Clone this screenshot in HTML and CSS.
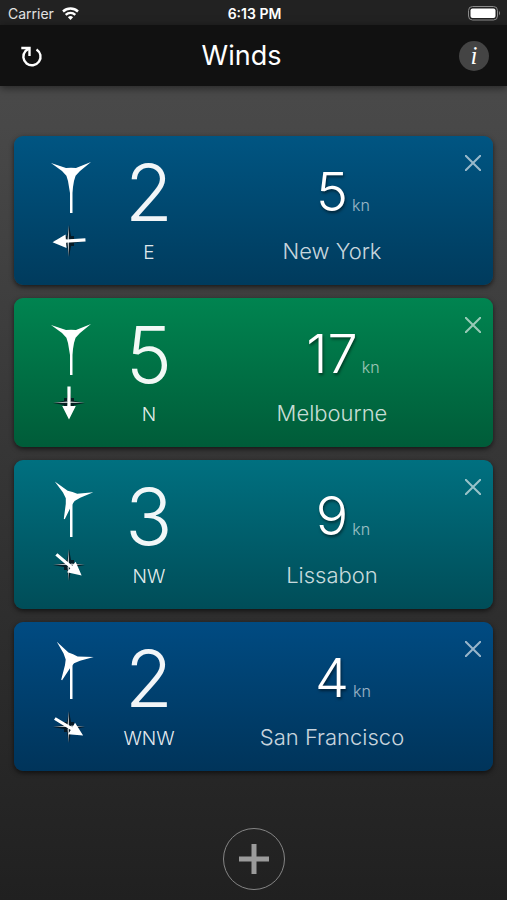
FILE: index.html
```
<!DOCTYPE html>
<html lang="en">
<head>
<meta charset="utf-8">
<meta name="viewport" content="width=device-width, initial-scale=1">
<title>Winds</title>
<link rel="stylesheet" href="styles.css">
</head>
<body>
<svg class="defs" aria-hidden="true">
  <defs>
    <symbol id="rotor" viewBox="-24 -24 48 48">
      <path d="M-0.500 23 L-3 8 L-4.600 2.700 L-9 -2 L-20 -10 L-5 -5 L0 -5.200 L5 -5 L20 -11 L9 -2 L4.600 2.700 L3 8 L0.500 23 Z"/>
    </symbol>
    <symbol id="rose" viewBox="-18 -18 36 36">
      <path fill="#06141c" opacity=".85" d="M0 -16 L2 -5 L5 -5 L5 -2 L16 0 L5 2 L5 5 L2 5 L0 16 L-2 5 L-5 5 L-5 2 L-16 0 L-5 -2 L-5 -5 L-2 -5 Z"/>
      <path fill="#fff" opacity=".7" d="M0 -16 L0 0 L-1.500 -2 Z M16 0 L0 0 L2 -1.500 Z M0 16 L0 0 L-1.500 2 Z M-16 0 L0 0 L-2 -1.500 Z"/>
    </symbol>
    <symbol id="arrow" viewBox="-18 -18 36 36">
      <path d="M-1.600 -16.500 H1.600 V3 H6.800 L0 16.500 L-6.800 3 H-1.600 Z"/>
    </symbol>
  </defs>
</svg>

<div class="status">
  <div class="carrier">
    <span>Carrier</span>
    <svg width="17" height="13" viewBox="0 0 17 13" fill="none" stroke="#fff" stroke-width="2.400">
      <path d="M1 4.500 A11 11 0 0 1 16 4.500"/>
      <path d="M3.700 7.800 A7 7 0 0 1 13.300 7.800"/>
      <path d="M8.500 13 L5.900 10.200 A3.700 3.700 0 0 1 11.100 10.200 Z" fill="#fff" stroke="none"/>
    </svg>
  </div>
  <time>6:13 PM</time>
  <svg class="battery" width="33" height="15" viewBox="0 0 33 15">
    <rect x=".5" y=".5" width="29" height="13.500" rx="4" fill="none" stroke="#8a8a8a"/>
    <rect x="2.500" y="2.500" width="25" height="9.500" rx="2" fill="#fff"/>
    <path d="M31 5 Q33 7.200 31 9.500 Z" fill="#8a8a8a"/>
  </svg>
</div>

<header class="bar">
  <button class="icon-button" aria-label="Refresh">
    <svg width="30" height="30" viewBox="0 0 30 30" fill="none" stroke="#fff" stroke-width="2.400">
      <path d="M20.500 8.400 A8.600 8.600 0 1 1 9.500 10 L13 7.500"/>
      <path d="M5.300 7 H13.500 V15"/>
    </svg>
  </button>
  <h1>Winds</h1>
  <button class="icon-button info" aria-label="Info">i</button>
</header>

<main>
  <ul class="cards">
    <li class="card blue">
      <div class="icons">
        <svg width="48" height="66" viewBox="-24 -24 48 66" fill="#fff"><path d="M-1 0 H1.500 V40 H-1 Z"/><use href="#rotor" x="-24" y="-24" width="48" height="48"/></svg>
        <svg class="compass" width="36" height="36" viewBox="-18 -18 36 36" fill="#fff"><use href="#rose" x="-18" y="-18" width="36" height="36"/><use href="#arrow" x="-18" y="-18" width="36" height="36" transform="rotate(86)"/></svg>
      </div>
      <div class="force"><strong>2</strong><span>E</span></div>
      <div class="place"><div class="speed"><b>5</b><small>kn</small></div><h2>New York</h2></div>
      <button class="close" aria-label="Remove New York"><svg width="16" height="16" viewBox="0 0 16 16"><path d="M0 0 L16 16 M16 0 L0 16"/></svg></button>
    </li>
    <li class="card green">
      <div class="icons">
        <svg width="48" height="66" viewBox="-24 -24 48 66" fill="#fff"><path d="M-1 0 H1.500 V40 H-1 Z"/><use href="#rotor" x="-24" y="-24" width="48" height="48"/></svg>
        <svg class="compass" width="36" height="36" viewBox="-18 -18 36 36" fill="#fff"><use href="#rose" x="-18" y="-18" width="36" height="36"/><use href="#arrow" x="-18" y="-18" width="36" height="36"/></svg>
      </div>
      <div class="force"><strong>5</strong><span>N</span></div>
      <div class="place"><div class="speed"><b>17</b><small>kn</small></div><h2>Melbourne</h2></div>
      <button class="close" aria-label="Remove Melbourne"><svg width="16" height="16" viewBox="0 0 16 16"><path d="M0 0 L16 16 M16 0 L0 16"/></svg></button>
    </li>
    <li class="card teal">
      <div class="icons">
        <svg width="48" height="66" viewBox="-24 -24 48 66" fill="#fff"><path d="M-1 0 H1.500 V40 H-1 Z"/><use href="#rotor" x="-24" y="-24" width="48" height="48" transform="rotate(17)"/></svg>
        <svg class="compass" width="36" height="36" viewBox="-18 -18 36 36" fill="#fff"><use href="#rose" x="-18" y="-18" width="36" height="36"/><use href="#arrow" x="-18" y="-18" width="36" height="36" transform="rotate(-50)"/></svg>
      </div>
      <div class="force"><strong>3</strong><span>NW</span></div>
      <div class="place"><div class="speed"><b>9</b><small>kn</small></div><h2>Lissabon</h2></div>
      <button class="close" aria-label="Remove Lissabon"><svg width="16" height="16" viewBox="0 0 16 16"><path d="M0 0 L16 16 M16 0 L0 16"/></svg></button>
    </li>
    <li class="card navy">
      <div class="icons">
        <svg width="48" height="66" viewBox="-24 -24 48 66" fill="#fff"><path d="M-1 0 H1.500 V40 H-1 Z"/><use href="#rotor" x="-24" y="-24" width="48" height="48" transform="rotate(24)"/></svg>
        <svg class="compass" width="36" height="36" viewBox="-18 -18 36 36" fill="#fff"><use href="#rose" x="-18" y="-18" width="36" height="36"/><use href="#arrow" x="-18" y="-18" width="36" height="36" transform="rotate(-59)"/></svg>
      </div>
      <div class="force"><strong>2</strong><span>WNW</span></div>
      <div class="place"><div class="speed"><b>4</b><small>kn</small></div><h2>San Francisco</h2></div>
      <button class="close" aria-label="Remove San Francisco"><svg width="16" height="16" viewBox="0 0 16 16"><path d="M0 0 L16 16 M16 0 L0 16"/></svg></button>
    </li>
  </ul>
  <button class="add" aria-label="Add place">
    <svg width="30" height="30" viewBox="0 0 30 30"><path d="M0 15 H30 M15 0 V30" stroke="#9b9b9b" stroke-width="5"/></svg>
  </button>
</main>
</body>
</html>
```
FILE: styles.css
```
* {
  box-sizing: border-box;
}

body {
  margin: 0;
  min-height: 100vh;
  background: linear-gradient(#4c4c4c, #484848 14%, #363636 50%, #222 96%, #202020);
  color: #fff;
  font-family: Inter, "Liberation Sans", sans-serif;
}

svg {
  display: block;
}

.defs {
  position: absolute;
  width: 0;
  height: 0;
}

button {
  border: 0;
  padding: 0;
  background: none;
  color: inherit;
}

.status {
  display: grid;
  grid-template-columns: 1fr auto 1fr;
  align-items: center;
  height: 25px;
  padding: 2px 6px 0 8px;
  background: #222;
  font-size: 14px;
}

.carrier {
  display: flex;
  align-items: center;
  gap: 8px;
  color: #e2e2e2;
}

.status time {
  font-weight: 600;
}

.battery {
  justify-self: end;
}

.bar {
  display: grid;
  grid-template-columns: 30px 1fr 30px;
  align-items: center;
  height: 61px;
  padding: 0 18px 0 16px;
  background: #111;
  box-shadow: 0 2px 8px rgba(0, 0, 0, 0.5);
}

.bar h1 {
  margin: 0;
  padding-right: 22px;
  font-size: 27px;
  font-weight: 400;
  text-align: center;
}

.icon-button {
  width: 30px;
  height: 30px;
  border-radius: 50%;
}

.info {
  background: #444;
  font: italic 25px/28px "Liberation Serif", serif;
}

main {
  padding: 50px 14px 10px;
}

.cards {
  display: grid;
  gap: 13px;
  margin: 0;
  padding: 0;
  list-style: none;
}

.card {
  position: relative;
  display: grid;
  grid-template-columns: 70px 86px 1fr;
  min-height: 149px;
  padding: 0 21px 0 22px;
  border-radius: 9px;
  box-shadow: 0 2px 5px rgba(0, 0, 0, 0.6);
}

.blue {
  background: linear-gradient(#005582, #003b5d);
}

.green {
  background: linear-gradient(#008450, #005c39);
}

.teal {
  background: linear-gradient(#007080, #004d58);
}

.navy {
  background: linear-gradient(#004b82, #00345a);
}

.icons {
  display: flex;
  flex-direction: column;
  align-items: center;
  gap: 8px;
  padding-top: 13px;
}

.compass {
  margin-right: 4px;
}

.force {
  padding-top: 17px;
  text-align: center;
}

.force strong {
  display: block;
  color: rgba(255, 255, 255, 0.95);
  font-size: 78px;
  font-weight: 300;
  line-height: 80px;
}

.force span {
  display: block;
  margin-top: 8px;
  color: rgba(255, 255, 255, 0.9);
  font-size: 19px;
  font-weight: 300;
  line-height: 24px;
}

.place {
  padding-top: 28px;
}

.speed {
  display: grid;
  grid-template-columns: 1fr auto 1fr;
  align-items: baseline;
  column-gap: 4px;
}

.speed b {
  grid-column: 2;
  font-size: 54px;
  font-weight: 300;
  line-height: 56px;
  text-shadow: 1px 2px 3px rgba(0, 0, 0, 0.5);
}

.speed small {
  font-size: 16px;
  font-weight: 300;
  line-height: 20px;
  opacity: 0.6;
}

.place h2 {
  margin: 17px 0 0;
  color: rgba(255, 255, 255, 0.8);
  font-size: 22px;
  font-weight: 300;
  line-height: 28px;
  text-align: center;
}

.close {
  position: absolute;
  top: 15px;
  right: 8px;
  padding: 4px;
}

.close path {
  stroke: rgba(255, 255, 255, 0.6);
  stroke-width: 2;
}

.add {
  display: grid;
  place-items: center;
  width: 62px;
  height: 62px;
  margin: 57px auto 0;
  border: 1px solid #858585;
  border-radius: 50%;
}
```
